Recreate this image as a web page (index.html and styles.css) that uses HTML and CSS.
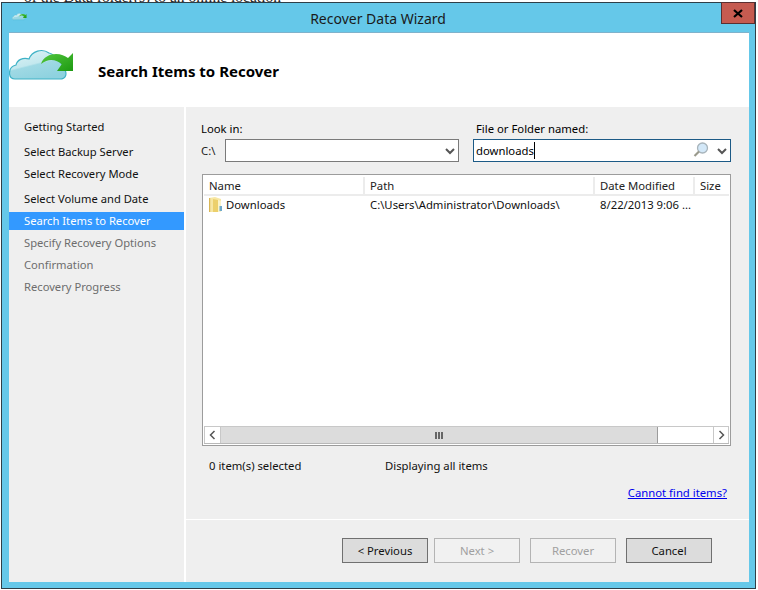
FILE: index.html
```html
<!DOCTYPE html>
<html lang="en">
<head>
<meta charset="utf-8">
<title>Recover Data Wizard</title>
<link rel="stylesheet" href="styles.css">
</head>
<body>
<div class="backdrop">of the Data folder(s) to an online location</div>
<div class="window">
  <div class="titlebar">
    <svg class="app-icon" width="15" height="9" viewBox="0 -1 66 35">
      <use href="#cloud"/>
    </svg>
    <span class="title">Recover Data Wizard</span>
    <div class="close"><svg width="10" height="9" viewBox="0 0 10 9"><path d="M1 1L9 8M9 1L1 8" stroke="#000" stroke-width="2.2" fill="none"/></svg></div>
  </div>
  <div class="client">
    <header class="head">
      <svg class="logo" width="66" height="35" viewBox="0 -1 66 35" aria-hidden="true">
        <defs>
          <linearGradient id="cl" x1="0.1" y1="0" x2="0.6" y2="1">
            <stop offset="0" stop-color="#dff3f6"/>
            <stop offset="0.5" stop-color="#c3e8ee"/>
            <stop offset="0.55" stop-color="#9fd9e4"/>
            <stop offset="1" stop-color="#8ed2df"/>
          </linearGradient>
          <linearGradient id="ar" x1="0" y1="0" x2="1" y2="1">
            <stop offset="0" stop-color="#55c83f"/>
            <stop offset="1" stop-color="#1d9a12"/>
          </linearGradient>
          <g id="cloud">
            <path d="M6 31C2 31 0.5 28 0.5 25C0.5 21 3 18 7 17C8 12 14 9 20 11C23 3 33 0 40 5C44 6 46 8 47 11C52 14 55 18 56 22C58 26 57 31 51 31Z" fill="url(#cl)" stroke="#3fb2c6" stroke-width="1.2"/>
            <path d="M32 16C34 9 41 6 47 6C52 6 56 8 59 10L64 5V23H48L52.7 16.3C48 12 40 9.5 32 16Z" fill="url(#ar)"/>
          </g>
        </defs>
        <use href="#cloud"/>
      </svg>
      <h1 class="page-title">Search Items to Recover</h1>
    </header>
    <div class="body">
      <nav class="nav">
        <div class="step">Getting Started</div>
        <div class="step gap">Select Backup Server</div>
        <div class="step">Select Recovery Mode</div>
        <div class="step gap">Select Volume and Date</div>
        <div class="step current">Search Items to Recover</div>
        <div class="step off">Specify Recovery Options</div>
        <div class="step off">Confirmation</div>
        <div class="step off">Recovery Progress</div>
      </nav>
      <main class="main">
        <div class="filters">
          <div class="field">
            <div class="label">Look in:</div>
            <div class="look-row">
              <span class="drive">C:\</span>
              <div class="combo">
                <svg class="chev" width="10" height="7" viewBox="0 0 10 7"><path d="M1 1L5 5L9 1" stroke="#555" stroke-width="2" fill="none"/></svg>
              </div>
            </div>
          </div>
          <div class="field">
            <div class="label name-label">File or Folder named:</div>
            <div class="combo focus">
              <span class="typed">downloads</span><span class="caret"></span>
              <svg class="glass" width="16" height="16" viewBox="0 0 16 16"><circle cx="9.5" cy="6" r="5" fill="#d3e8f8" stroke="#a8b4bb" stroke-width="1.3"/><path d="M6 9.5L1.5 14" stroke="#9a9a8c" stroke-width="2.2"/></svg>
              <svg class="chev" width="10" height="7" viewBox="0 0 10 7"><path d="M1 1L5 5L9 1" stroke="#555" stroke-width="2" fill="none"/></svg>
            </div>
          </div>
        </div>
        <section class="list">
          <div class="list-head">
            <div class="col-name">Name</div>
            <div class="col-path">Path</div>
            <div class="col-date">Date Modified</div>
            <div class="col-size">Size</div>
          </div>
          <div class="list-rows">
            <div class="list-row">
              <div class="col-name cell">
                <svg class="folder" width="14" height="16" viewBox="0 0 14 16"><path d="M0 1L6 0L12 2V15H0Z" fill="#f7e7a4"/><path d="M0 1V15H1.2V1Z" fill="#d8b655"/><path d="M4 2L9 3V15H4Z" fill="#ecd06c"/><path d="M9 3L12 4V15H9Z" fill="#fbf3c8"/><path d="M10.5 9H13V14H10.5Z" fill="#6fa9c9"/></svg>
                Downloads
              </div>
              <div class="col-path cell">C:\Users\Administrator\Downloads\</div>
              <div class="col-date cell">8/22/2013 9:06 ...</div>
              <div class="col-size cell"></div>
            </div>
          </div>
          <div class="hscroll">
            <div class="sbtn"><svg width="7" height="10" viewBox="0 0 7 10"><path d="M5.5 1L1.5 5L5.5 9" stroke="#555" stroke-width="1.5" fill="none"/></svg></div>
            <div class="thumb"><span class="grip"></span><span class="grip"></span><span class="grip"></span></div>
            <div class="track"></div>
            <div class="sbtn end"><svg width="7" height="10" viewBox="0 0 7 10"><path d="M1.5 1L5.5 5L1.5 9" stroke="#555" stroke-width="1.5" fill="none"/></svg></div>
          </div>
        </section>
        <div class="status">
          <span>0 item(s) selected</span>
          <span>Displaying all items</span>
        </div>
        <div class="link-row"><a class="link" href="#">Cannot find items?</a></div>
        <footer class="footer">
          <button class="btn">&lt; Previous</button>
          <button class="btn" disabled>Next &gt;</button>
          <button class="btn far" disabled>Recover</button>
          <button class="btn far">Cancel</button>
        </footer>
      </main>
    </div>
  </div>
</div>
</body>
</html>
```

FILE: styles.css
```css
* { box-sizing: border-box; }
html, body { margin: 0; height: 100%; }
body {
  position: relative;
  width: 758px;
  height: 590px;
  overflow: hidden;
  background: #fff;
  font-family: "Noto Sans", "Open Sans", sans-serif;
  font-size: 11.3px;
  color: #000;
}
.backdrop {
  position: absolute;
  left: 24px;
  top: -10px;
  font-family: "Liberation Serif", serif;
  font-size: 15.5px;
  line-height: 14px;
  white-space: nowrap;
  color: #222;
}
.window {
  position: absolute;
  left: 1px;
  top: 2px;
  width: 755px;
  height: 587px;
  border: 1px solid #2e3f48;
  background: #65c8e9;
  padding: 0 6px 6px 7px;
  display: flex;
  flex-direction: column;
}
.titlebar {
  position: relative;
  height: 30px;
  flex: none;
  display: flex;
  align-items: center;
  justify-content: center;
}
.app-icon { position: absolute; left: 3px; top: 9px; }
.title { font-size: 14px; color: #1a1a1a; padding-top: 1px; margin-right: 2px; }
.close {
  position: absolute;
  right: -6px;
  top: -1px;
  width: 34px;
  height: 22px;
  background: #c55b50;
  border: 1px solid #5b2f30;
  display: flex;
  align-items: center;
  justify-content: center;
}
.client {
  flex: 1;
  display: flex;
  flex-direction: column;
  background: #fff;
  box-shadow: 0 -1px 0 #7fb2cb;
  min-height: 0;
}
.head {
  height: 74px;
  flex: none;
  display: flex;
  align-items: center;
}
.logo { margin-top: -11px; flex: none; }
.page-title { margin: 2px 0 0 23px; font-size: 15px; font-weight: 700; line-height: 20px; }
.body {
  flex: 1;
  display: grid;
  grid-template-columns: 175px 1fr;
  column-gap: 2px;
  min-height: 0;
}
.nav {
  background: #efefef;
  padding-top: 11px;
  display: flex;
  flex-direction: column;
  gap: 4px;
  font-size: 11.2px;
}
.step {
  height: 18px;
  line-height: 17px;
  padding-left: 15px;
  color: #111;
  white-space: nowrap;
}
.step.gap { margin-top: 3px; }
.step.current { background: #3399ff; color: #fff; }
.step.off { color: #6d6d6d; }
.main {
  background: #efefef;
  display: flex;
  flex-direction: column;
  min-width: 0;
}
.filters {
  margin: 14px 18px 0 15px;
  display: grid;
  grid-template-columns: 258px 258px;
  column-gap: 14px;
}
.label { height: 18px; line-height: 15px; }
.name-label { padding-left: 3px; }
.look-row { display: flex; align-items: center; }
.drive { width: 24px; flex: none; color: #222; }
.combo {
  position: relative;
  flex: 1;
  height: 23px;
  background: #fff;
  border: 1px solid #7a7a7a;
  display: flex;
  align-items: center;
  padding-left: 2px;
}
.combo.focus { border-color: #1c5a86; }
.typed { line-height: 20px; }
.caret { width: 1px; height: 17px; background: #000; }
.chev { position: absolute; right: 3px; top: 8px; }
.glass { position: absolute; right: 21px; top: 2px; }
.list {
  margin: 12px 18px 0 16px;
  height: 272px;
  flex: none;
  background: #fff;
  border: 1px solid #9c9c9c;
  padding: 1px;
  display: flex;
  flex-direction: column;
}
.list-head, .list-row {
  display: grid;
  grid-template-columns: 161px 230px 100px 1fr;
  line-height: 18px;
}
.list-head { border-bottom: 2px solid #ececec; height: 20px; padding-top: 1px; color: #222; }
.list-row { height: 18px; }
.list-head > div { border-right: 2px solid #ececec; padding-left: 5px; white-space: nowrap; overflow: hidden; }
.list-head > div:last-child { border-right: 0; }
.list-rows { flex: 1; }
.cell { padding-left: 5px; white-space: nowrap; display: flex; align-items: center; color: #111; }
.folder { margin: 0 3px 0 0; flex: none; }
.hscroll {
  height: 18px;
  flex: none;
  display: flex;
  border-top: 1px solid #c8c8c8;
  border-bottom: 1px solid #b8b8b8;
}
.sbtn {
  width: 17px;
  flex: none;
  display: flex;
  align-items: center;
  justify-content: center;
  border-left: 1px solid #c8c8c8;
  border-right: 1px solid #c8c8c8;
}
.sbtn.end { width: 16px; }
.thumb {
  width: 437px;
  flex: none;
  background: #dcdcdc;
  border-right: 1px solid #9c9c9c;
  display: flex;
  align-items: center;
  justify-content: center;
  gap: 1px;
}
.grip { width: 2px; height: 7px; background: #666; }
.track { flex: 1; background: #fff; }
.status {
  margin: 12px 0 0 23px;
  display: grid;
  grid-template-columns: 176px auto;
  justify-content: start;
  height: 16px;
  line-height: 15px;
  color: #111;
}
.link-row {
  margin: 11px 22px 0 0;
  text-align: right;
  height: 16px;
  line-height: 15px;
}
.link { color: #0000ee; text-decoration: underline; }
.footer {
  margin-top: 18px;
  border-top: 1px solid #fff;
  padding: 18px 37px 0 156px;
  display: flex;
  gap: 6px;
}
.btn {
  width: 86px;
  height: 25px;
  padding: 0 0 1px;
  background: #dcdcdc;
  border: 1px solid #707070;
  font: inherit;
  color: #111;
}
.btn:disabled { background: #f1f1f1; border-color: #b4b4b4; color: #a0a0a0; }
.btn.far { margin-left: 4px; }
```
